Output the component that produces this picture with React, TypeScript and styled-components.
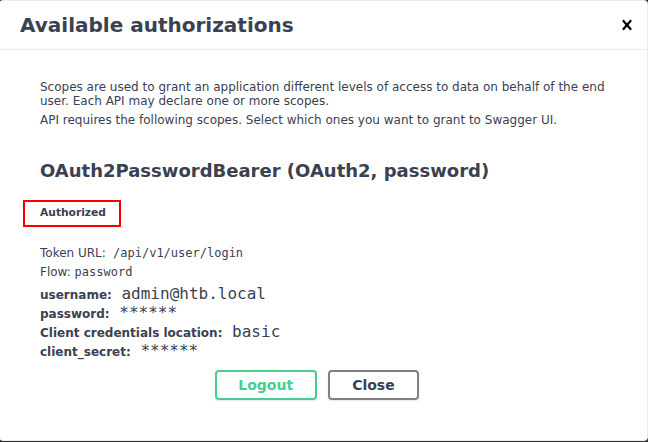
import React from "react";
import styled, { createGlobalStyle } from "styled-components";

const GlobalStyle = createGlobalStyle`
  html, body {
    margin: 0;
    padding: 0;
  }
  body {
    background: #333333;
    font-family: "DejaVu Sans", sans-serif;
    overflow: hidden;
  }
`;

const Modal = styled.div`
  box-sizing: border-box;
  width: 649px;
  margin: 0 0 0 -1px;
  background: #fff;
  border: 1px solid #ebebeb;
  border-radius: 4px;
  font-family: "DejaVu Sans", sans-serif;
  color: #3b4151;
`;

const Header = styled.div`
  display: flex;
  align-items: center;
  padding: 12px 0;
  border-bottom: 1px solid #ebebeb;
`;

const Title = styled.h3`
  flex: 1;
  margin: 0;
  padding: 0 20px;
  font-size: 20px;
  font-weight: 700;
  color: #3b4151;
`;

const CloseX = styled.button`
  appearance: none;
  background: none;
  border: none;
  padding: 0 10px;
  display: flex;
  align-items: center;
  cursor: pointer;
`;

const Content = styled.div`
  padding: 20px;
`;

const Section = styled.div`
  padding: 10px 20px 0;
  margin-bottom: 10px;
`;

const ScopeDef = styled.div`
  padding-bottom: 20px;
`;

const Text = styled.p`
  margin: 0 0 5px;
  font-size: 12px;
  color: #3b4151;
`;

const SchemeTitle = styled.h4`
  margin: 8px 0 19px;
  font-size: 18px;
  font-weight: 700;
  color: #3b4151;
`;

const AuthorizedBox = styled.div`
  box-sizing: border-box;
  width: 98px;
  margin: 0 0 19px -17px;
  padding: 4px 0 6px 15px;
  border: 2px solid #ff0000;
`;

const AuthorizedLabel = styled.h6`
  margin: 0;
  font-size: 10.7px;
  font-weight: 700;
  color: #3b4151;
`;

const InlineCode = styled.code`
  font-family: "DejaVu Sans Mono", monospace;
  font-size: 12px;
  color: #3b4151;
`;

const Row = styled.div`
  font-size: 16px;
`;

const Label = styled.label`
  font-size: 12px;
  font-weight: 700;
  color: #3b4151;
`;

const Value = styled.code`
  font-family: "DejaVu Sans Mono", monospace;
  font-size: 16px;
  color: #3b4151;
  white-space: pre;
`;

const BtnWrapper = styled.div`
  display: flex;
  justify-content: center;
  gap: 11px;
  padding: 10px 0;
`;

const Btn = styled.button<{ $variant: "authorize" | "done" }>`
  appearance: none;
  background: transparent;
  border: 2px solid ${(p) => (p.$variant === "authorize" ? "#49cc90" : "#808080")};
  border-radius: 4px;
  box-shadow: 0 1px 2px rgba(0, 0, 0, 0.1);
  color: ${(p) => (p.$variant === "authorize" ? "#49cc90" : "#3b4151")};
  font-family: "DejaVu Sans", sans-serif;
  font-size: 14px;
  font-weight: 700;
  line-height: 16px;
  padding: 5px ${(p) => (p.$variant === "authorize" ? "21.5px" : "22.5px")};
  margin-right: ${(p) => (p.$variant === "done" ? "13px" : "0")};
  cursor: pointer;
`;

const rows: { label: string; value: string }[] = [
  { label: "username:", value: " admin@htb.local " },
  { label: "password:", value: " ****** " },
  { label: "Client credentials location:", value: " basic " },
  { label: "client_secret:", value: " ****** " },
];

export default function App() {
  return (
    <>
      <GlobalStyle />
      <Modal>
        <Header>
          <Title>Available authorizations</Title>
          <CloseX aria-label="Close">
            <svg width="20" height="20" viewBox="0 0 20 20">
              <path
                fill="#000"
                d="M14.348 14.849c-.469.469-1.229.469-1.697 0L10 11.819l-2.651 3.029c-.469.469-1.229.469-1.697 0-.469-.469-.469-1.229 0-1.697l2.758-3.15-2.759-3.152c-.469-.469-.469-1.228 0-1.697.469-.469 1.228-.469 1.697 0L10 8.183l2.651-3.031c.469-.469 1.228-.469 1.697 0 .469.469.469 1.229 0 1.697l-2.758 3.152 2.758 3.15c.469.469.469 1.229 0 1.698z"
              />
            </svg>
          </CloseX>
        </Header>
        <Content>
          <Section>
            <ScopeDef>
              <Text>
                Scopes are used to grant an application different levels of access to data on behalf of the end
                user. Each API may declare one or more scopes.
              </Text>
              <Text>API requires the following scopes. Select which ones you want to grant to Swagger UI.</Text>
            </ScopeDef>
            <SchemeTitle>OAuth2PasswordBearer (OAuth2, password)</SchemeTitle>
            <AuthorizedBox>
              <AuthorizedLabel>Authorized</AuthorizedLabel>
            </AuthorizedBox>
            <Text>
              Token URL:<InlineCode> /api/v1/user/login</InlineCode>
            </Text>
            <Text>
              Flow: <InlineCode>password</InlineCode>
            </Text>
            {rows.map((r) => (
              <Row key={r.label}>
                <Label>{r.label}</Label>
                <Value>{r.value}</Value>
              </Row>
            ))}
            <BtnWrapper>
              <Btn $variant="authorize">Logout</Btn>
              <Btn $variant="done">Close</Btn>
            </BtnWrapper>
          </Section>
        </Content>
      </Modal>
    </>
  );
}
